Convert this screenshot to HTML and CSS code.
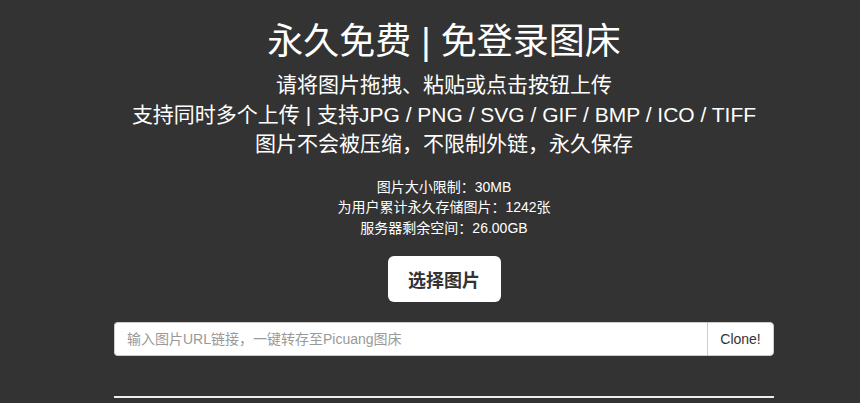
FILE: index.html
```html
<!DOCTYPE html>
<html lang="zh-CN">
<head>
<meta charset="utf-8">
<title>永久免费 | 免登录图床</title>
<link rel="stylesheet" href="styles.css">
</head>
<body>
<main class="wrap">
  <h1 class="title">永久免费 | 免登录图床</h1>
  <div class="intro">
    <p>请将图片拖拽、粘贴或点击按钮上传</p>
    <p>支持同时多个上传 | 支持JPG / PNG / SVG / GIF / BMP / ICO / TIFF</p>
    <p>图片不会被压缩，不限制外链，永久保存</p>
  </div>
  <div class="stats">
    <p>图片大小限制：30MB</p>
    <p>为用户累计永久存储图片：1242张</p>
    <p>服务器剩余空间：26.00GB</p>
  </div>
  <div class="pick-row">
    <button class="pick" type="button">选择图片</button>
  </div>
  <form class="clone">
    <input class="clone-input" type="text" placeholder="输入图片URL链接，一键转存至Picuang图床">
    <button class="clone-btn" type="button">Clone!</button>
  </form>
  <hr class="rule">
</main>
</body>
</html>
```
FILE: styles.css
```css
html, body {
  margin: 0;
  padding: 0;
  background: #333333;
  color: #ffffff;
  font-family: "Liberation Sans", "Noto Sans CJK SC", sans-serif;
}

.wrap {
  width: 660px;
  margin-left: 114px;
  text-align: center;
  overflow: hidden;
}

.title {
  margin: 18px 0 0;
  font-size: 36px;
  font-weight: 400;
  line-height: 48px;
}

.intro {
  margin-top: 4px;
  font-size: 21px;
  line-height: 29.5px;
}

.intro p,
.stats p {
  margin: 0;
  white-space: nowrap;
}

.stats {
  margin-top: 18px;
  font-size: 14px;
  line-height: 20.5px;
}

.pick-row {
  margin-top: 18px;
  display: flex;
  justify-content: center;
}

.pick {
  width: 113px;
  height: 46px;
  border: none;
  border-radius: 6px;
  background: #ffffff;
  color: #333333;
  font-family: "Liberation Sans", "Noto Sans CJK SC", sans-serif;
  font-size: 18px;
  font-weight: 700;
  cursor: pointer;
}

.clone {
  margin: 20px 0 0;
  display: flex;
  height: 34px;
}

.clone-input {
  flex: 1;
  min-width: 0;
  box-sizing: border-box;
  height: 34px;
  margin: 0;
  padding: 6px 12px;
  border: 1px solid #cccccc;
  border-right: none;
  border-radius: 4px 0 0 4px;
  background: #ffffff;
  color: #555555;
  font-family: "Liberation Sans", "Noto Sans CJK SC", sans-serif;
  font-size: 14px;
}

.clone-input::placeholder {
  color: #999999;
}

.clone-btn {
  width: 67px;
  box-sizing: border-box;
  height: 34px;
  margin: 0;
  border: 1px solid #cccccc;
  border-radius: 0 4px 4px 0;
  background: #ffffff;
  color: #333333;
  font-family: "Liberation Sans", "Noto Sans CJK SC", sans-serif;
  font-size: 14px;
}

.rule {
  margin: 40px 0 0;
  border: none;
  border-top: 2px solid #eeeeee;
  height: 0;
}
```
